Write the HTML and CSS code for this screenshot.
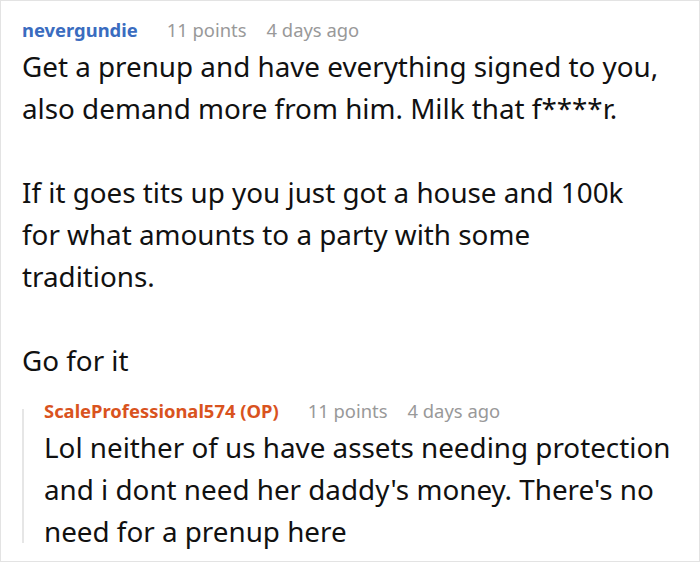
FILE: index.html
```html
<!DOCTYPE html>
<html lang="en">
<head>
<meta charset="utf-8">
<title>Comment</title>
<link rel="stylesheet" href="styles.css">
</head>
<body>
<div class="card">
  <div class="comment">
    <div class="meta">
      <span class="author">nevergundie</span>
      <span class="info">11 points</span>
      <span class="info">4 days ago</span>
    </div>
    <div class="body">
      <p>Get a prenup and have everything signed to you, also demand more from him. Milk that f****r.</p>
      <p>If it goes tits up you just got a house and 100k for what amounts to a party with some traditions.</p>
      <p>Go for it</p>
    </div>
  </div>
  <div class="reply">
    <div class="rule"></div>
    <div class="reply-content">
      <div class="meta">
        <span class="author op">ScaleProfessional574 (OP)</span>
        <span class="info">11 points</span>
        <span class="info">4 days ago</span>
      </div>
      <div class="body">
        <p>Lol neither of us have assets needing protection and i dont need her daddy's money. There's no need for a prenup here</p>
      </div>
    </div>
  </div>
</div>
</body>
</html>
```
FILE: styles.css
```css
html, body {
  margin: 0;
  padding: 0;
  background: #fff;
}
.card {
  box-sizing: border-box;
  width: 700px;
  height: 562px;
  border: 1px solid #e3e3e3;
  padding: 16px 15px 0 21px;
  font-family: "Noto Sans", "Open Sans", sans-serif;
  color: #111;
  overflow: hidden;
}
.meta {
  font-size: 18.4px;
  line-height: 26px;
  display: flex;
}
.author {
  font-weight: 700;
  color: #3a6cbf;
  margin-right: 29px;
}
.author.op {
  color: #d9531e;
}
.info {
  color: #999;
  margin-right: 20px;
}
.body {
  margin-top: 2px;
  font-size: 27.8px;
  line-height: 42px;
  max-width: 640px;
}
.body p {
  margin: 0 0 42px 0;
}
.body p:last-child {
  margin-bottom: 0;
}
.reply {
  display: flex;
  margin-top: 17px;
}
.rule {
  width: 2px;
  background: #e6e6e6;
  margin-top: 11px;
  margin-bottom: 9px;
  flex: none;
}
.reply-content {
  padding-left: 20px;
  flex: 1;
}
```
